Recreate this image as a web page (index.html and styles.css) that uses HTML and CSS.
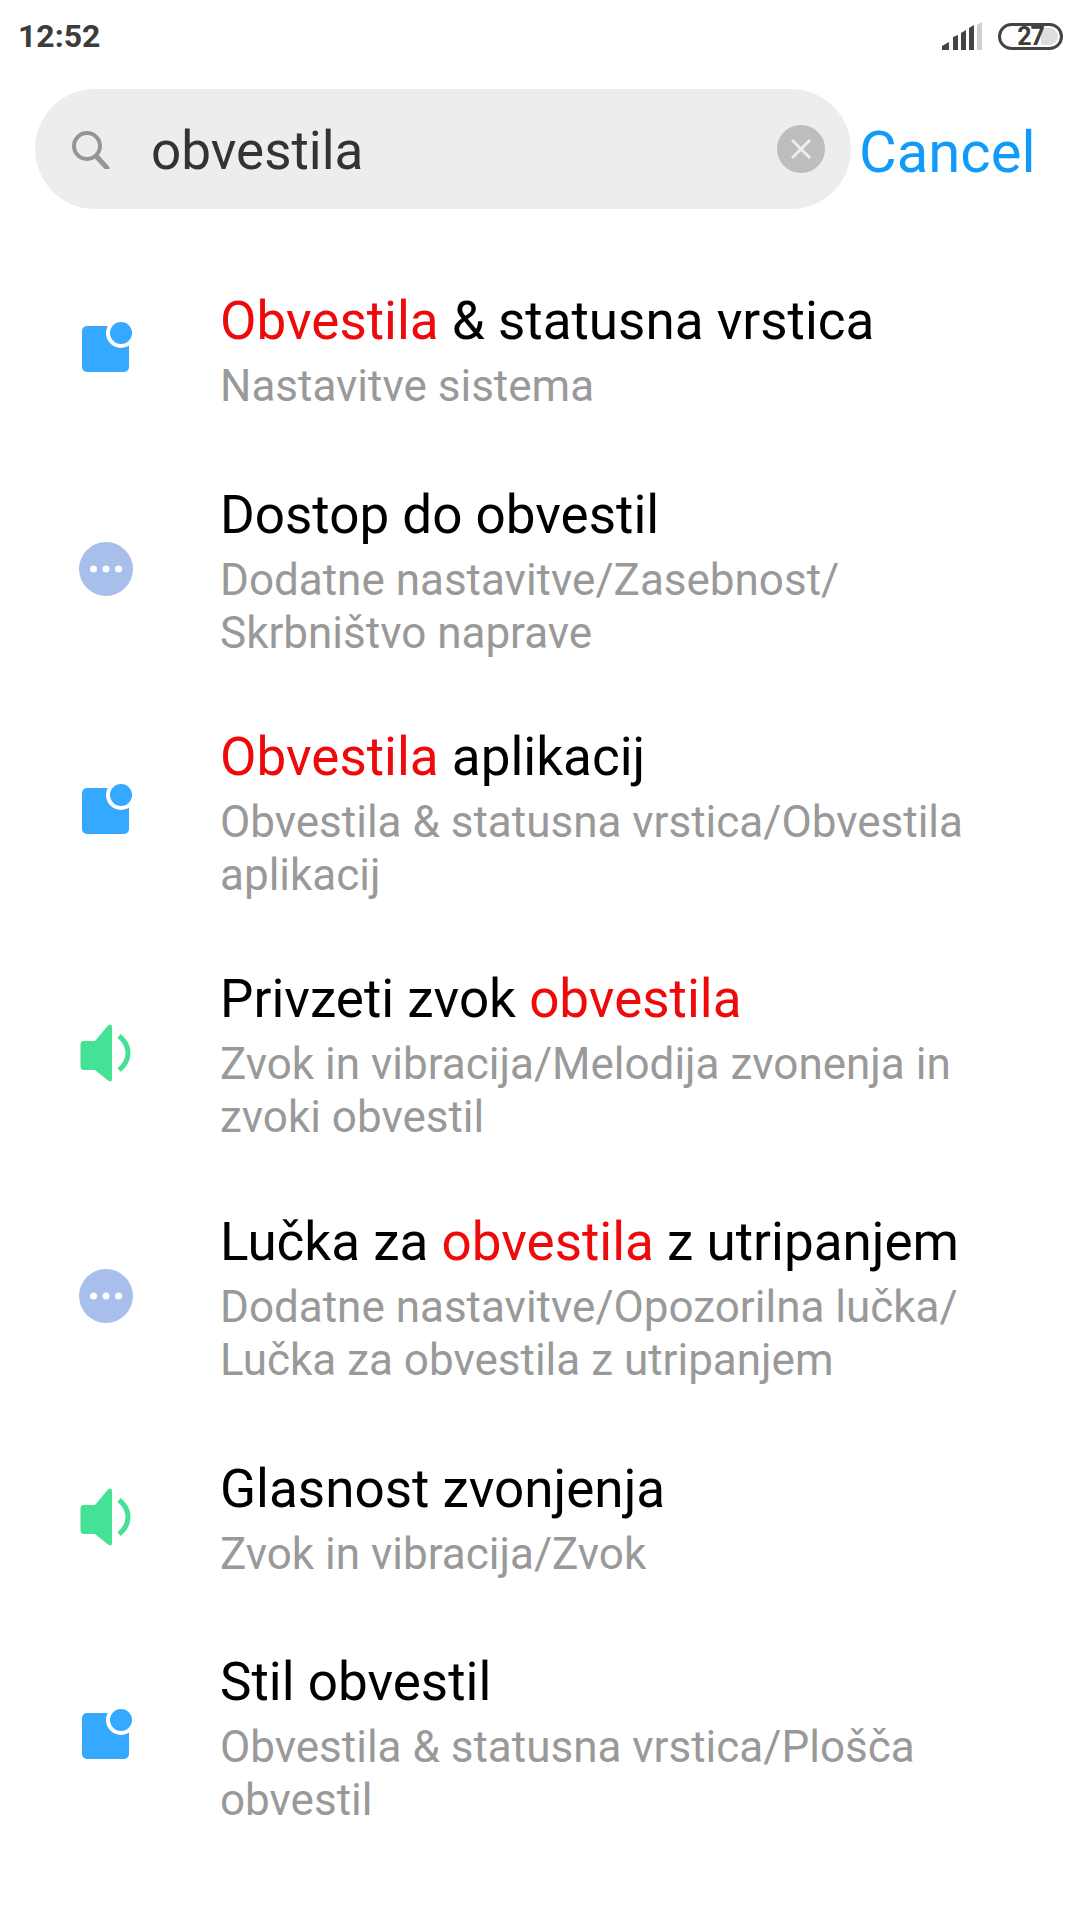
FILE: index.html
```html
<!DOCTYPE html>
<html lang="en">
<head>
    <meta charset="UTF-8">
    <meta name="viewport" content="width=device-width, initial-scale=1.0">
    <title>Search settings</title>
    <link rel="stylesheet" href="styles.css">
</head>
<body>
    <svg class="defs" width="0" height="0">
        <symbol id="ic-notif" viewBox="0 0 60 60">
            <rect x="6" y="7" width="47" height="46" rx="5" fill="#35a9ff"/>
            <circle cx="45" cy="14" r="15" fill="#fff"/>
            <circle cx="45" cy="14" r="11" fill="#35a9ff"/>
        </symbol>
        <symbol id="ic-more" viewBox="0 0 60 60">
            <circle cx="30" cy="30" r="27" fill="#a8bfeb"/>
            <circle cx="17.5" cy="30" r="3.5" fill="#fff"/>
            <circle cx="30" cy="30" r="3.5" fill="#fff"/>
            <circle cx="42.5" cy="30" r="3.5" fill="#fff"/>
        </symbol>
        <symbol id="ic-sound" viewBox="0 0 60 60">
            <path d="M8 18H19L32 2.5q4-2.5 4 2V55.5q0 4.5-4 2L19 47H8q-3.5 0-3.5-3.5V21.5q0-3.5 3.5-3.5z" fill="#45e195"/>
            <path d="M43 13q9 7 9 17t-9 17" fill="none" stroke="#45e195" stroke-width="5"/>
        </symbol>
    </svg>

    <div class="statusbar">
        <span class="time">12:52</span>
        <div class="status-right">
            <svg class="signal" width="40" height="28" viewBox="0 0 40 28">
                <path d="M0 28v-4l7-4v8z" fill="#444"/>
                <path d="M11 28V15l5-2v15z" fill="#444"/>
                <path d="M19 28V11l5-3v20z" fill="#444"/>
                <path d="M27 28V6l5-3v25z" fill="#444"/>
                <path d="M35 28V3l5-3v28z" fill="#cfcfcf"/>
            </svg>
            <div class="battery">
                <span class="battery-fill"></span>
                <span class="battery-num">27</span>
            </div>
        </div>
    </div>

    <div class="searchrow">
        <div class="searchbox">
            <svg class="search-ic" width="40" height="40" viewBox="0 0 40 40">
                <circle cx="15" cy="17" r="13" fill="none" stroke="#959595" stroke-width="4"/>
                <path d="M25 28l10 11" stroke="#959595" stroke-width="5" stroke-linecap="round"/>
            </svg>
            <span class="query">obvestila</span>
            <svg class="clear-ic" width="48" height="48" viewBox="0 0 48 48">
                <circle cx="24" cy="24" r="24" fill="#bdbdbd"/>
                <path d="M15 15l18 18M33 15L15 33" stroke="#eee" stroke-width="3"/>
            </svg>
        </div>
        <span class="cancel">Cancel</span>
    </div>

    <ul class="results">
        <li class="row">
            <svg class="row-ic" width="60" height="60"><use href="#ic-notif"/></svg>
            <div class="row-text">
                <div class="row-title"><em>Obvestila</em> &amp; statusna vrstica</div>
                <div class="row-sub">Nastavitve sistema</div>
            </div>
        </li>
        <li class="row">
            <svg class="row-ic" width="60" height="60"><use href="#ic-more"/></svg>
            <div class="row-text">
                <div class="row-title">Dostop do obvestil</div>
                <div class="row-sub">Dodatne nastavitve/Zasebnost/<br>Skrbništvo naprave</div>
            </div>
        </li>
        <li class="row">
            <svg class="row-ic" width="60" height="60"><use href="#ic-notif"/></svg>
            <div class="row-text">
                <div class="row-title"><em>Obvestila</em> aplikacij</div>
                <div class="row-sub">Obvestila &amp; statusna vrstica/Obvestila<br>aplikacij</div>
            </div>
        </li>
        <li class="row">
            <svg class="row-ic" width="60" height="60"><use href="#ic-sound"/></svg>
            <div class="row-text">
                <div class="row-title">Privzeti zvok <em>obvestila</em></div>
                <div class="row-sub">Zvok in vibracija/Melodija zvonenja in<br>zvoki obvestil</div>
            </div>
        </li>
        <li class="row row-tall">
            <svg class="row-ic" width="60" height="60"><use href="#ic-more"/></svg>
            <div class="row-text">
                <div class="row-title">Lučka za <em>obvestila</em> z utripanjem</div>
                <div class="row-sub">Dodatne nastavitve/Opozorilna lučka/<br>Lučka za obvestila z utripanjem</div>
            </div>
        </li>
        <li class="row">
            <svg class="row-ic" width="60" height="60"><use href="#ic-sound"/></svg>
            <div class="row-text">
                <div class="row-title">Glasnost zvonjenja</div>
                <div class="row-sub">Zvok in vibracija/Zvok</div>
            </div>
        </li>
        <li class="row">
            <svg class="row-ic" width="60" height="60"><use href="#ic-notif"/></svg>
            <div class="row-text">
                <div class="row-title">Stil obvestil</div>
                <div class="row-sub">Obvestila &amp; statusna vrstica/Plošča<br>obvestil</div>
            </div>
        </li>
    </ul>
</body>
</html>
```

FILE: styles.css
```css
body
{
    margin: 0;
    padding: 0;
    width: 1080px;
    height: 1920px;
    background: #fff;
    font-family: Roboto, sans-serif;
    overflow: hidden;
}

.defs
{
    display: block;
    height: 0;
}

.statusbar
{
    height: 72px;
    padding: 0 17px 0 18px;
    display: flex;
    justify-content: space-between;
    align-items: center;
}

.time
{
    font-size: 32px;
    font-weight: 700;
    color: #3c3c3c;
}

.status-right
{
    display: flex;
    align-items: center;
    gap: 16px;
}

.battery
{
    position: relative;
    width: 65px;
    height: 27px;
    box-sizing: border-box;
    border: 3px solid #444;
    border-radius: 14px;
    display: flex;
    align-items: center;
    justify-content: center;
}

.battery-fill
{
    position: absolute;
    top: 2px;
    bottom: 2px;
    right: 2px;
    width: 17px;
    background: #ddd;
    border-radius: 0 10px 10px 0;
}

.battery-num
{
    position: relative;
    font-size: 25px;
    font-weight: 700;
    line-height: 29px;
    color: #3c3c3c;
    letter-spacing: -1px;
}

.searchrow
{
    margin-top: 17px;
    padding-left: 35px;
    display: flex;
    align-items: center;
    gap: 8px;
}

.searchbox
{
    width: 816px;
    height: 120px;
    background: #ededed;
    border-radius: 60px;
    display: flex;
    align-items: center;
    padding: 0 26px 0 37px;
    box-sizing: border-box;
}

.search-ic
{
    flex-shrink: 0;
}

.query
{
    flex: 1;
    margin-left: 39px;
    padding-top: 4px;
    font-size: 53px;
    color: #333;
}

.cancel
{
    padding-top: 6px;
    font-size: 58px;
    color: #0f9bf7;
}

.results
{
    list-style: none;
    margin: 0;
    padding: 40px 0 0 0;
}

.row
{
    display: flex;
    align-items: center;
    min-height: 197px;
    box-sizing: border-box;
    padding: 31px 0 31px 76px;
}

.row:first-child
{
    min-height: 199px;
}

.row-tall
{
    min-height: 244px;
}

.row-ic
{
    flex-shrink: 0;
}

.row-text
{
    margin-left: 84px;
    padding-top: 4px;
}

.row-title
{
    font-size: 53px;
    line-height: 64px;
    margin-bottom: 7px;
    color: #000;
}

.row-title em
{
    font-style: normal;
    color: #ee0a0a;
}

.row-sub
{
    font-size: 44px;
    line-height: 52.5px;
    color: #999;
}
```
